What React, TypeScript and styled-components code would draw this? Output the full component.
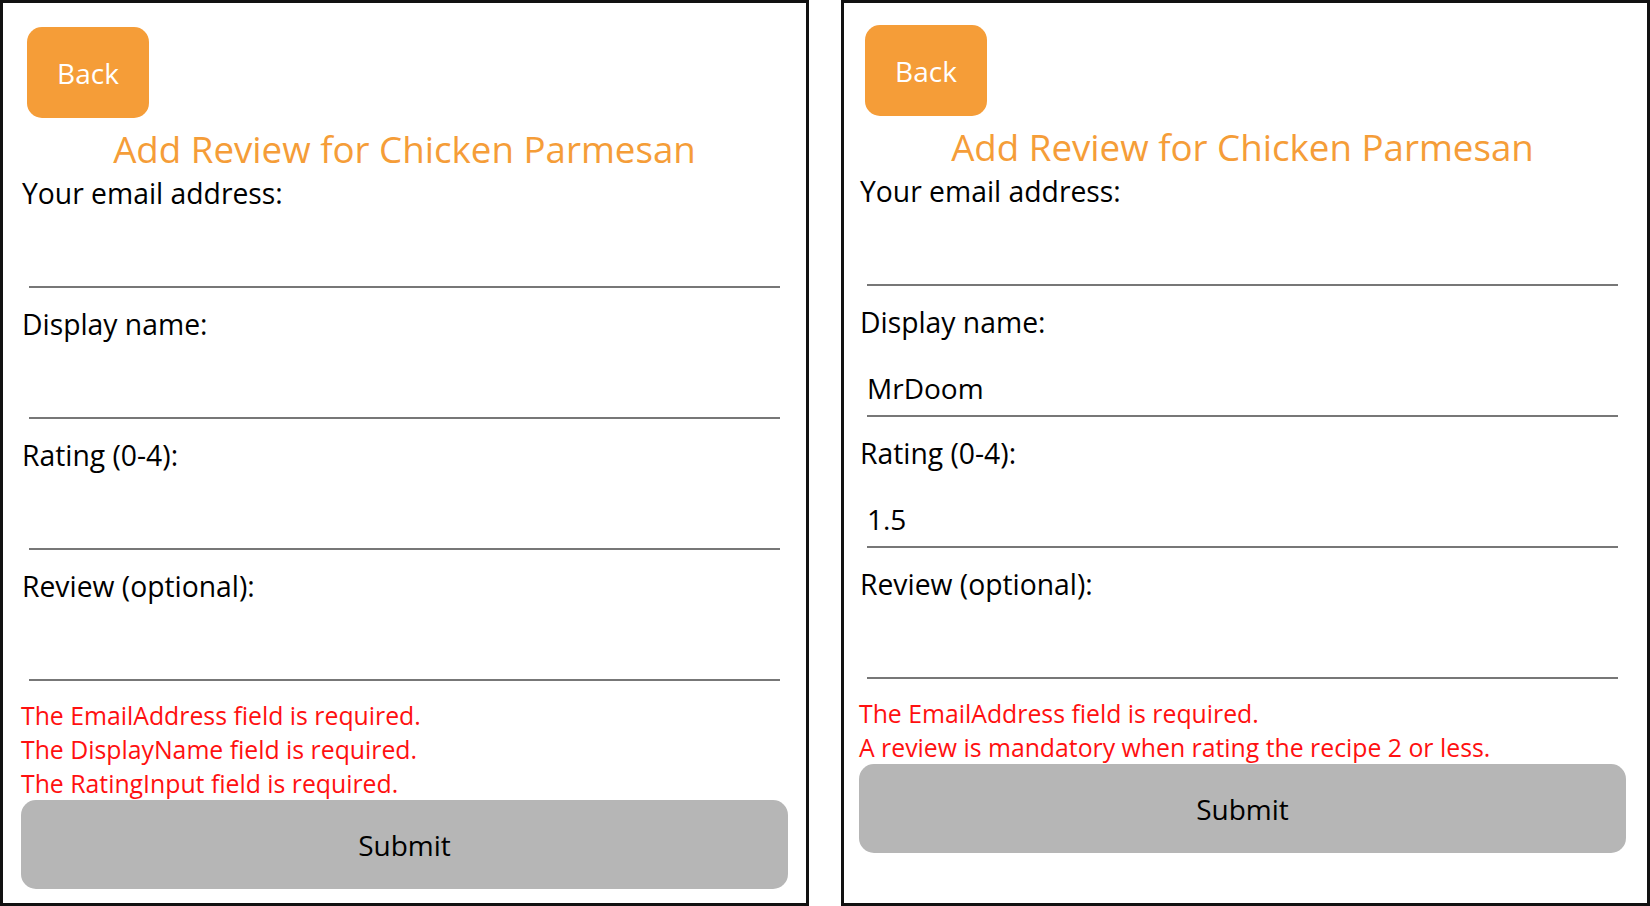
import styled, { createGlobalStyle } from "styled-components";

const GlobalStyle = createGlobalStyle`
  html, body {
    margin: 0;
    padding: 0;
    background: #fff;
  }
  * {
    box-sizing: border-box;
  }
`;

type FieldData = {
  label: string;
  value: string;
};

type ReviewFormProps = {
  fields: FieldData[];
  errors: string[];
  offsetX?: number;
  offsetY?: number;
};

function ReviewForm({ fields, errors, offsetX = 0, offsetY = 0 }: ReviewFormProps) {
  return (
    <Panel $offsetX={offsetX} $offsetY={offsetY}>
      <BackButton type="button">Back</BackButton>
      <Title>Add Review for Chicken Parmesan</Title>
      {fields.map((f) => (
        <Field key={f.label}>
          <Label>{f.label}</Label>
          <Entry type="text" value={f.value} readOnly />
        </Field>
      ))}
      <Errors>
        {errors.map((e) => (
          <ErrorLine key={e}>{e}</ErrorLine>
        ))}
      </Errors>
      <SubmitButton type="button">Submit</SubmitButton>
    </Panel>
  );
}

function App() {
  return (
    <>
      <GlobalStyle />
      <Page>
        <ReviewForm
          fields={[
            { label: "Your email address:", value: "" },
            { label: "Display name:", value: "" },
            { label: "Rating (0-4):", value: "" },
            { label: "Review (optional):", value: "" },
          ]}
          errors={[
            "The EmailAddress field is required.",
            "The DisplayName field is required.",
            "The RatingInput field is required.",
          ]}
        />
        <ReviewForm
          offsetX={3}
          offsetY={2}
          fields={[
            { label: "Your email address:", value: "" },
            { label: "Display name:", value: "MrDoom" },
            { label: "Rating (0-4):", value: "1.5" },
            { label: "Review (optional):", value: "" },
          ]}
          errors={[
            "The EmailAddress field is required.",
            "A review is mandatory when rating the recipe 2 or less.",
          ]}
        />
      </Page>
    </>
  );
}

export default App;

const Page = styled.div`
  display: flex;
  column-gap: 32px;
  width: 1650px;
  height: 906px;
  font-family: "Open Sans", "Noto Sans", sans-serif;
`;

const Panel = styled.div<{ $offsetX: number; $offsetY: number }>`
  display: flex;
  flex-direction: column;
  width: 809px;
  height: 906px;
  border: 3px solid #111;
  padding: ${(p) => 24 - p.$offsetY}px ${(p) => 18 + p.$offsetX}px 0
    ${(p) => 18 - p.$offsetX}px;
`;

const BackButton = styled.button`
  align-self: flex-start;
  width: 122px;
  height: 91px;
  margin-left: 6px;
  border: none;
  border-radius: 15px;
  background: #f59d38;
  color: #fff;
  font-family: inherit;
  font-size: 28px;
  font-weight: 400;
  padding: 0;
`;

const Title = styled.h1`
  margin: 7px 0 0;
  height: 49px;
  color: #f59d38;
  font-size: 36.7px;
  font-weight: 400;
  line-height: 49px;
  text-align: center;
`;

const Field = styled.div`
  display: flex;
  flex-direction: column;
  margin-bottom: 17px;
`;

const Label = styled.label`
  height: 38px;
  color: #000;
  font-size: 28.3px;
  line-height: 38px;
  padding-left: 1px;
`;

const Entry = styled.input`
  width: calc(100% - 16px);
  height: 76px;
  margin: 0 8px;
  padding: 28px 0 8px;
  border: none;
  border-bottom: 2px solid #777;
  outline: none;
  background: transparent;
  color: #000;
  font-family: inherit;
  font-size: 28px;
  line-height: normal;
`;

const Errors = styled.div`
  display: flex;
  flex-direction: column;
`;

const ErrorLine = styled.p`
  margin: 0;
  color: #ff1010;
  font-size: 24.8px;
  line-height: 34px;
`;

const SubmitButton = styled.button`
  width: 100%;
  height: 89px;
  border: none;
  border-radius: 15px;
  background: #b6b6b6;
  color: #000;
  font-family: inherit;
  font-size: 28px;
  padding: 0;
`;
